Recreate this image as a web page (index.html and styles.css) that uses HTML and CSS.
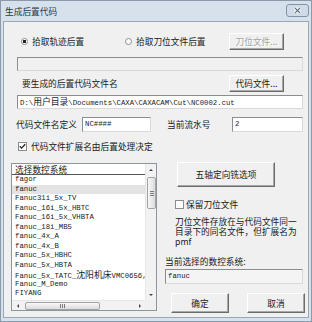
FILE: index.html
```html
<!DOCTYPE html>
<html lang="zh-CN">
<head>
    <meta charset="UTF-8">
    <title>生成后置代码</title>
    <link rel="stylesheet" href="styles.css">
</head>
<body>
<div class="window">
    <div class="titlebar">
        <span class="titlebar__text">生成后置代码</span>
        <svg class="titlebar__close" width="23" height="13" viewBox="0 0 23 13">
            <rect x="0.5" y="0.5" width="22" height="12" rx="2.5" fill="#d0dbe7" stroke="#8494a8"/>
            <path d="M9 4l5 5M14 4l-5 5" stroke="#fff" stroke-width="3"/>
            <path d="M9 4l5 5M14 4l-5 5" stroke="#66727f" stroke-width="1.1"/>
        </svg>
    </div>
    <div class="client">
        <!-- 后置方式 -->
        <div class="pick">
            <label class="radio"><span class="radio__dot is-checked"></span>拾取轨迹后置</label>
            <label class="radio"><span class="radio__dot"></span>拾取刀位文件后置</label>
            <button class="btn btn--small" disabled>刀位文件...</button>
        </div>
        <div class="edit edit--wide edit--disabled"></div>

        <!-- 代码文件 -->
        <div class="file-row">
            <span>要生成的后置代码文件名</span>
            <button class="btn btn--small">代码文件...</button>
        </div>
        <div class="edit edit--wide edit--path mono">D:\<span class="wide">用户目录</span>\Documents\CAXA\CAXACAM\Cut\NC0002.cut</div>

        <div class="name-row">
            <span class="name-row__label">代码文件名定义</span>
            <div class="edit edit--name mono">NC####</div>
            <span class="name-row__label name-row__label--serial">当前流水号</span>
            <div class="edit edit--serial mono">2</div>
        </div>

        <label class="check-row">
            <span class="check is-checked">
                <svg width="7" height="7" viewBox="0 0 7 7"><path d="M0.8 3.2l1.8 1.9 3.6-3.9" fill="none" stroke="#222" stroke-width="1.3"/></svg>
            </span>
            代码文件扩展名由后置处理决定
        </label>

        <div class="main">
            <!-- 数控系统列表 -->
            <div class="list">
                <div class="list__body">
                    <div class="list__head">选择数控系统</div>
                    <div class="list__items mono">
                        <div class="list__item">fagor</div>
                        <div class="list__item is-selected">fanuc</div>
                        <div class="list__item">Fanuc31i_5x_TV</div>
                        <div class="list__item">Fanuc_16i_5x_HBTC</div>
                        <div class="list__item">Fanuc_16i_5x_VHBTA</div>
                        <div class="list__item">fanuc_18i_MB5</div>
                        <div class="list__item">fanuc_4x_A</div>
                        <div class="list__item">fanuc_4x_B</div>
                        <div class="list__item">Fanuc_5x_HBHC</div>
                        <div class="list__item">Fanuc_5x_HBTA</div>
                        <div class="list__item">Fanuc_5x_TATC_<span class="wide">沈阳机床</span>VMC0656,</div>
                        <div class="list__item">Fanuc_M_Demo</div>
                        <div class="list__item">FIYANG</div>
                    </div>
                </div>
                <div class="vscroll">
                    <span class="sb-arrow"><i class="tri tri--up"></i></span>
                    <span class="vscroll__track"><span class="vscroll__thumb"><i></i><i></i><i></i></span></span>
                    <span class="sb-arrow"><i class="tri tri--down"></i></span>
                </div>
                <div class="hscroll">
                    <span class="sb-arrow"><i class="tri tri--left"></i></span>
                    <span class="hscroll__track"><span class="hscroll__thumb"><i></i><i></i><i></i></span></span>
                    <span class="sb-arrow"><i class="tri tri--right"></i></span>
                </div>
                <div class="list__corner"></div>
            </div>

            <div class="side">
                <button class="btn btn--five">五轴定向铣选项</button>
                <label class="keep-row">
                    <span class="check"></span>
                    保留刀位文件
                </label>
                <div class="note">刀位文件存放在与代码文件同一目录下的同名文件，但扩展名为pmf</div>
                <div class="current-label">当前选择的数控系统:</div>
                <div class="edit edit--current mono">fanuc</div>
                <div class="ok-row">
                    <button class="btn btn--ok">确定</button>
                    <button class="btn btn--ok">取消</button>
                </div>
            </div>
        </div>
    </div>
</div>
</body>
</html>
```

FILE: styles.css
```css
body {
    margin: 0;
}
.window {
    width: 312px;
    height: 322px;
    box-sizing: border-box;
    border: 1px solid #8b9aab;
    background: #d7e1ec;
    padding: 0 2px 3px;
    display: flex;
    flex-direction: column;
    font-family: "Noto Sans CJK SC", sans-serif;
    font-size: 8.7px;
    color: #1a1a1a;
}
.titlebar {
    height: 20px;
    flex: none;
    display: flex;
    justify-content: space-between;
    align-items: center;
    padding-left: 2px;
}
.titlebar__text {
    color: #26384b;
}
.titlebar__close {
    align-self: flex-start;
    margin-top: 3px;
}
.client {
    flex: 1;
    border: 1px solid #9aa7b5;
    background: #f0f0f0;
}
.mono {
    font-family: "Liberation Mono", monospace;
    font-size: 7.3px;
}
.wide {
    font-family: "Noto Sans CJK SC", sans-serif;
    font-size: 8.8px;
}

/* buttons */
.btn {
    box-sizing: border-box;
    padding: 0;
    font: inherit;
    color: #1a1a1a;
    background: #f0f0f0;
    border: 1px solid;
    border-color: #fff #6b6b6b #6b6b6b #fff;
    box-shadow: inset -1px -1px #a8a8a8;
}
.btn[disabled] {
    color: #a3a3a3;
    text-shadow: 1px 1px #fff;
}
.btn--small {
    width: 55px;
    height: 17px;
}
.btn--five {
    width: 98px;
    height: 25px;
    margin-left: 12px;
}
.btn--ok {
    width: 58px;
    height: 20px;
}

/* edits */
.edit {
    box-sizing: border-box;
    background: #fff;
    border: 1px solid;
    border-color: #8c8c8c #d9d9d9 #d9d9d9 #8c8c8c;
    padding-left: 2px;
    white-space: nowrap;
    overflow: hidden;
    color: #1a1a1a;
}
.edit--wide {
    width: 286px;
    height: 14px;
    margin-left: 13px;
    line-height: 12px;
}
.edit--disabled {
    margin-top: 7px;
    background: #f0f0f0;
}
.edit--path {
    margin-top: 3px;
}
.edit--name {
    width: 69px;
    height: 15px;
    line-height: 13px;
}
.edit--serial {
    width: 71px;
    height: 15px;
    line-height: 13px;
}
.edit--current {
    width: 138px;
    height: 15px;
    line-height: 13px;
    margin-top: 2px;
    background: #f4f4f4;
}

/* radio / check */
.pick {
    display: flex;
    align-items: center;
    height: 17px;
    margin-top: 11px;
    padding-left: 17px;
}
.radio {
    display: flex;
    align-items: center;
    gap: 4px;
    width: 104px;
}
.radio__dot {
    width: 7px;
    height: 7px;
    box-sizing: border-box;
    border: 1px solid #8c8c8c;
    border-radius: 50%;
    background: #fff;
}
.radio__dot.is-checked {
    background: radial-gradient(circle, #222 0 1.4px, #fff 2px);
}
.check {
    width: 9px;
    height: 9px;
    box-sizing: border-box;
    border: 1px solid #8c8c8c;
    background: #fff;
    display: flex;
    align-items: center;
    justify-content: center;
}
.file-row {
    display: flex;
    align-items: center;
    justify-content: space-between;
    height: 17px;
    margin-top: 4px;
    padding: 0 24px 0 18px;
}
.name-row {
    display: flex;
    align-items: center;
    height: 15px;
    margin-top: 8px;
    padding-left: 12px;
}
.name-row__label {
    width: 66px;
}
.name-row__label--serial {
    width: 65px;
    margin-left: 16px;
}
.check-row {
    display: flex;
    align-items: center;
    gap: 4px;
    height: 10px;
    margin-top: 9px;
    padding-left: 14px;
}

/* list + side */
.main {
    display: flex;
    align-items: flex-start;
    margin-top: 11px;
    padding-left: 7px;
}
.list {
    width: 146px;
    height: 148px;
    margin-top: 1px;
    box-sizing: border-box;
    border: 1px solid #8e949b;
    background: #fff;
    display: grid;
    grid-template-columns: 1fr 11px;
    grid-template-rows: 1fr 10px;
}
.list__body {
    overflow: hidden;
}
.list__head {
    height: 11px;
    line-height: 11px;
    padding-left: 3px;
    box-shadow: inset 0 -1px #555;
}
.list__item {
    height: 9.5px;
    line-height: 9.5px;
    padding-left: 3px;
    white-space: nowrap;
    color: #1a1a1a;
}
.list__item.is-selected {
    background: #e3e3e3;
}
.vscroll {
    grid-row: 1;
    grid-column: 2;
    display: flex;
    flex-direction: column;
    background: #f2f2f2;
    border-left: 1px solid #e6e6e6;
}
.hscroll {
    display: flex;
    background: #f2f2f2;
    border-top: 1px solid #e6e6e6;
}
.list__corner {
    background: #f0f0f0;
}
.sb-arrow {
    flex: none;
    width: 11px;
    height: 10px;
    display: flex;
    align-items: center;
    justify-content: center;
}
.vscroll .sb-arrow {
    width: auto;
    height: 11px;
}
.tri {
    width: 0;
    height: 0;
    border: 2.5px solid transparent;
}
.tri--up { border-bottom-color: #444; border-top-width: 0; }
.tri--down { border-top-color: #444; border-bottom-width: 0; }
.tri--left { border-right-color: #444; border-left-width: 0; }
.tri--right { border-left-color: #444; border-right-width: 0; }
.vscroll__track {
    flex: 1;
    padding: 2px 0 0 1px;
}
.vscroll__thumb {
    width: 9px;
    height: 32px;
    box-sizing: border-box;
    border: 1px solid #a3a3a3;
    border-radius: 2px;
    background: linear-gradient(to right, #f7f7f7, #dcdcdc);
    display: flex;
    flex-direction: column;
    align-items: center;
    justify-content: center;
    gap: 1px;
}
.vscroll__thumb i {
    width: 4px;
    height: 1px;
    background: #7a7a7a;
}
.hscroll__track {
    flex: 1;
    padding: 1px 0 0 2px;
}
.hscroll__thumb {
    width: 75px;
    height: 8px;
    box-sizing: border-box;
    border: 1px solid #a3a3a3;
    border-radius: 2px;
    background: linear-gradient(#f7f7f7, #dcdcdc);
    display: flex;
    align-items: center;
    justify-content: center;
    gap: 1px;
}
.hscroll__thumb i {
    width: 1px;
    height: 4px;
    background: #7a7a7a;
}
.side {
    width: 139px;
    margin-left: 8px;
    display: flex;
    flex-direction: column;
    align-items: flex-start;
}
.keep-row {
    display: flex;
    align-items: center;
    gap: 2px;
    height: 9px;
    margin-top: 13px;
    padding-left: 10px;
}
.note {
    width: 125px;
    margin: 8px 0 0 10px;
    line-height: 10px;
}
.current-label {
    margin-top: 10px;
    line-height: 10px;
}
.ok-row {
    display: flex;
    gap: 18px;
    margin-top: 9px;
    padding-left: 6px;
}
```
